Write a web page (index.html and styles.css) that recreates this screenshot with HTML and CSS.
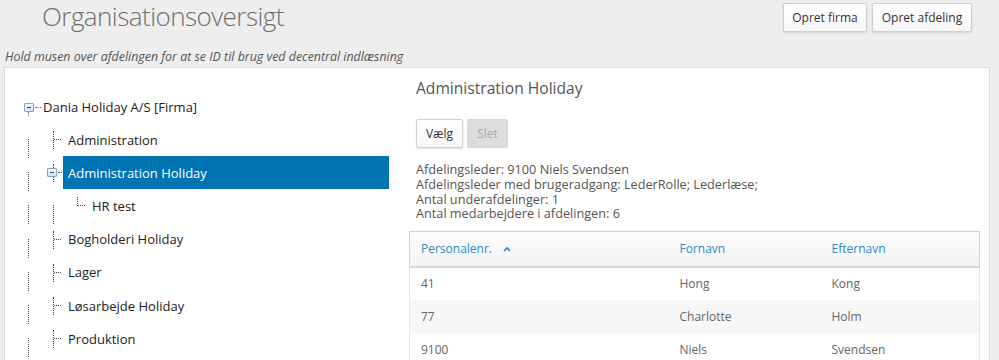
FILE: index.html
```html
<!DOCTYPE html>
<html lang="da">
<head>
<meta charset="utf-8">
<title>Organisationsoversigt</title>
<link rel="stylesheet" href="styles.css">
</head>
<body>
<header class="top">
  <h1 class="title">Organisationsoversigt</h1>
  <div class="top-actions">
    <button class="btn btn-firma">Opret firma</button>
    <button class="btn btn-afd">Opret afdeling</button>
  </div>
</header>
<p class="hint">Hold musen over afdelingen for at se ID til brug ved decentral indlæsning</p>
<main class="panel">
  <section class="tree">
    <div class="root">
      <span class="toggle root-toggle"></span>
      <span class="root-label">Dania Holiday A/S [Firma]</span>
    </div>
    <ul class="children">
      <li class="node"><span class="label">Administration</span></li>
      <li class="node selected has-toggle"><span class="toggle node-toggle"></span><span class="label">Administration Holiday</span></li>
      <li class="node sub"><span class="label">HR test</span></li>
      <li class="node"><span class="label">Bogholderi Holiday</span></li>
      <li class="node"><span class="label">Lager</span></li>
      <li class="node"><span class="label">Løsarbejde Holiday</span></li>
      <li class="node"><span class="label">Produktion</span></li>
    </ul>
  </section>
  <section class="detail">
    <h2 class="detail-title">Administration Holiday</h2>
    <div class="detail-actions">
      <button class="btn btn-small">Vælg</button>
      <button class="btn btn-small btn-disabled" disabled>Slet</button>
    </div>
    <div class="info">
      <div>Afdelingsleder: 9100 Niels Svendsen</div>
      <div>Afdelingsleder med brugeradgang: LederRolle; Lederlæse;</div>
      <div>Antal underafdelinger: 1</div>
      <div>Antal medarbejdere i afdelingen: 6</div>
    </div>
    <table class="grid">
      <thead>
        <tr>
          <th class="c1">Personalenr. <svg class="sort" width="8" height="6" viewBox="0 0 8 6"><path d="M1 5 L4 2 L7 5" fill="none" stroke="#2a8ac4" stroke-width="1.6"/></svg></th>
          <th class="c2">Fornavn</th>
          <th class="c3">Efternavn</th>
        </tr>
      </thead>
      <tbody>
        <tr><td>41</td><td>Hong</td><td>Kong</td></tr>
        <tr class="alt"><td>77</td><td>Charlotte</td><td>Holm</td></tr>
        <tr><td>9100</td><td>Niels</td><td>Svendsen</td></tr>
      </tbody>
    </table>
  </section>
</main>
</body>
</html>
```
FILE: styles.css
```css
* { box-sizing: border-box; }
html, body { margin: 0; padding: 0; }
body {
  background: #eeeeee;
  font-family: "Open Sans", "DejaVu Sans", sans-serif;
  color: #333;
  width: 999px;
  height: 360px;
  overflow: hidden;
}
.top {
  display: flex;
  justify-content: space-between;
  align-items: flex-start;
  height: 47px;
}
.title {
  margin: 0;
  padding: 0 0 0 42px;
  font-weight: 300;
  font-size: 26px;
  line-height: 34px;
  margin-top: -1px;
  color: #707070;
  letter-spacing: -0.55px;
  white-space: nowrap;
}
.top-actions {
  display: flex;
  gap: 5px;
  padding: 3px 27px 0 0;
}
.btn {
  font-family: "Open Sans", "DejaVu Sans", sans-serif;
  font-size: 12px;
  color: #333;
  background: linear-gradient(#ffffff, #f7f7f7);
  border: 1px solid #cfcfcf;
  border-radius: 2px;
  box-shadow: 0 1px 2px rgba(0,0,0,0.12);
  padding: 0;
  height: 29px;
}
.btn-firma { width: 84px; }
.btn-afd { width: 100px; }
.hint {
  margin: 0;
  padding: 0 0 0 5px;
  font-style: italic;
  font-size: 12.4px;
  line-height: 20px;
  color: #555;
  white-space: nowrap;
}
.panel {
  margin: 0 9px 0 4px;
  background: #fff;
  border: 1px solid #dcdcdc;
  border-bottom: none;
  height: 293px;
  display: flex;
}
.tree {
  width: 404px;
  flex: none;
  padding-top: 23px;
  font-size: 13px;
  color: #222;
}
.root {
  height: 32px;
  display: flex;
  align-items: center;
  position: relative;
}
.toggle {
  display: inline-block;
  width: 10px;
  height: 9px;
  border: 1px solid #7fa6cc;
  background: linear-gradient(#f4f8fc, #d6e3f1);
  border-radius: 1px;
  position: relative;
}
.toggle::before {
  content: "";
  position: absolute;
  left: 2px; top: 3px;
  width: 4px; height: 1px;
  background: #2c4a6b;
}
.root-toggle { margin-left: 19px; }
.root-toggle::after {
  content: "";
  position: absolute;
  left: 3px; top: 8px;
  height: 4px;
  border-left: 1px dotted #666;
}
.root-label {
  margin-left: 9px;
  position: relative;
}
.root-label::before {
  content: "";
  position: absolute;
  left: -8px; top: 9px;
  width: 6px;
  border-top: 1px dotted #666;
}
.children {
  list-style: none;
  margin: 0;
  padding: 0;
}
.node {
  height: 33.2px;
  display: flex;
  align-items: center;
  position: relative;
  padding-left: 58px;
}
.node::before {
  content: "";
  position: absolute;
  left: 23px;
  top: 16px;
  height: 19px;
  border-left: 1px dotted #555;
}
.node .label {
  position: relative;
  display: flex;
  align-items: center;
  height: 33px;
  padding-left: 5px;
  width: 326px;
}
.node .label::before {
  content: "";
  position: absolute;
  left: -10px;
  top: 8px;
  height: 18px;
  border-left: 1px dotted #444;
}
.node .label::after {
  content: "";
  position: absolute;
  left: -9px;
  top: 16px;
  width: 7px;
  border-top: 1px dotted #444;
}
.node.selected .label {
  background: #0073b3;
  color: #fff;
}
.node.has-toggle .node-toggle {
  position: absolute;
  left: 42px;
  top: 12px;
  z-index: 1;
}
.node.has-toggle .label::after { left: -5px; width: 4px; }
.node.sub { padding-left: 82px; }
.node.sub .label::before { top: 8px; height: 9px; }
.node.sub::after {
  content: "";
  position: absolute;
  left: 48px;
  top: 16px;
  height: 19px;
  border-left: 1px dotted #444;
}
.detail {
  flex: 1;
  padding: 9px 9px 0 0;
  color: #555;
}
.detail-title {
  margin: 0 0 0 7px;
  font-size: 15.6px;
  font-weight: 400;
  line-height: 22px;
  color: #555;
}
.detail-actions {
  display: flex;
  gap: 4px;
  margin: 20px 0 0 7px;
}
.btn-small { height: 29px; width: 47px; font-size: 12px; }
.btn-disabled {
  width: 41px;
  background: #dddddd;
  border-color: #d6d6d6;
  color: #a9a9a9;
  box-shadow: none;
}
.info {
  margin: 14px 0 0 7px;
  font-size: 12.7px;
  line-height: 14.8px;
  color: #555;
}
.grid {
  margin-top: 10px;
  width: 571px;
  border-collapse: collapse;
  font-size: 12px;
}
.grid th {
  text-align: left;
  font-weight: 400;
  color: #2a8ac4;
  height: 35px;
  padding: 0 0 0 11px;
  background: linear-gradient(#fdfdfd, #f3f3f3);
  border-top: 1px solid #cfcfcf;
  border-bottom: 2px solid #d8d8d8;
}
.grid th.c1 { width: 259px; border-left: 1px solid #cfcfcf; }
.grid th.c2 { width: 152px; }
.grid th.c3 { border-right: 1px solid #cfcfcf; }
.sort { margin-left: 8px; vertical-align: 1px; }
.grid td {
  height: 33px;
  padding: 0 0 0 11px;
  color: #666;
}
.grid td:first-child { border-left: 1px solid #e6e6e6; }
.grid td:last-child { border-right: 1px solid #e6e6e6; }
.grid tr.alt td { background: #f7f7f7; }
```
